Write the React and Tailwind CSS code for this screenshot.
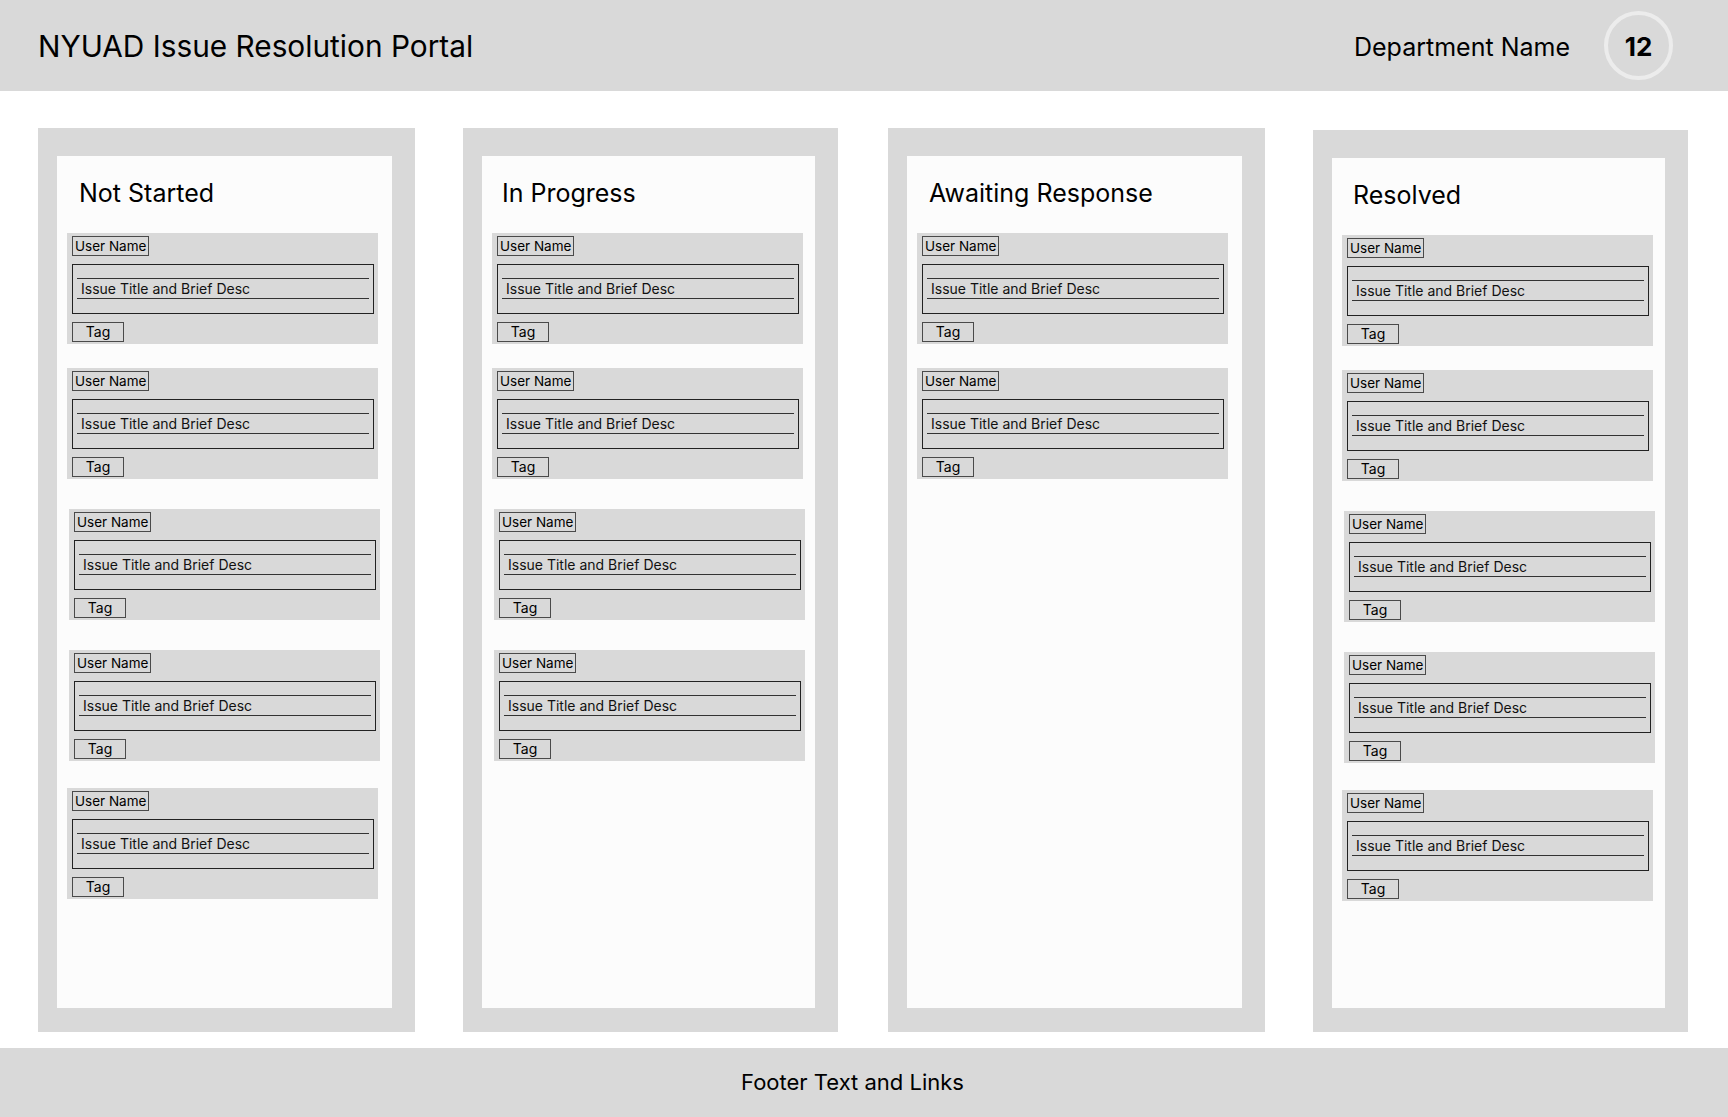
import React from 'react';

const font = { fontFamily: 'Inter, "Noto Sans", sans-serif' };

// top margin / left shift for each card slot, read off the mockup
const SLOTS = [
  { mt: 'mt-[25px]', ml: 'ml-[10px]' },
  { mt: 'mt-[24px]', ml: 'ml-[10px]' },
  { mt: 'mt-[30px]', ml: 'ml-[12px]' },
  { mt: 'mt-[30px]', ml: 'ml-[12px]' },
  { mt: 'mt-[27px]', ml: 'ml-[10px]' },
];

const COLUMNS = [
  { title: 'Not Started', count: 5, outer: 'w-[377px] h-[904px]', titlePad: 'pl-[22px]' },
  { title: 'In Progress', count: 4, outer: 'w-[375px] h-[904px] ml-[48px]', titlePad: 'pl-[20px]' },
  { title: 'Awaiting Response', count: 2, outer: 'w-[377px] h-[904px] ml-[50px]', titlePad: 'pl-[22px]' },
  { title: 'Resolved', count: 5, outer: 'w-[375px] h-[902px] mt-[2px] ml-[48px]', titlePad: 'pl-[21px]' },
];

function IssueCard({ slot }) {
  return (
    <div className={`${slot.mt} ${slot.ml} w-[311px] h-[111px] bg-[#d9d9d9] pt-[3px] pl-[5px] pr-[4px] flex flex-col`}>
      <div className="self-start h-[20px] px-[2px] border border-[#4a4a4a] text-[13.5px] leading-[18px] text-black">
        User Name
      </div>
      <div className="mt-[8px] w-[302px] h-[50px] border border-[#222] pt-[13px] px-[4px]">
        <div className="border-t border-b border-[#333] h-[21px] pl-[4px] text-[14px] leading-[19px] text-[#111]">
          Issue Title and Brief Desc
        </div>
      </div>
      <div className="mt-[8px] w-[52px] h-[20px] border border-[#4a4a4a] text-[14px] leading-[18px] text-center text-black">
        Tag
      </div>
    </div>
  );
}

function Column({ col }) {
  return (
    <div className={`${col.outer} shrink-0 bg-[#d9d9d9] pt-[28px] pl-[19px] pr-[23px] pb-[24px] flex`}>
      <div className="flex-1 bg-[#fcfcfc] flex flex-col">
        <h2 className={`pt-[22px] ${col.titlePad} text-[25px] leading-[30px] font-normal text-black`}>
          {col.title}
        </h2>
        {Array.from({ length: col.count }).map((_, i) => (
          <IssueCard key={i} slot={SLOTS[i]} />
        ))}
      </div>
    </div>
  );
}

export default function App() {
  return (
    <div className="w-[1728px] h-[1117px] bg-white flex flex-col" style={font}>
      <header className="h-[91px] bg-[#d9d9d9] flex items-center pl-[38px] pr-[55px]">
        <h1 className="mt-[2px] text-[29.8px] font-normal text-black">NYUAD Issue Resolution Portal</h1>
        <div className="ml-auto flex items-center">
          <span className="mt-[4px] text-[25px] text-black">Department Name</span>
          <div className="ml-[34px] w-[69px] h-[69px] rounded-full border-[4px] border-[#ececec] flex items-center justify-center">
            <span className="mt-[2px] text-[26px] font-bold text-black">12</span>
          </div>
        </div>
      </header>

      <main className="flex-1 flex items-start pt-[37px] pl-[38px]">
        {COLUMNS.map((col) => (
          <Column key={col.title} col={col} />
        ))}
      </main>

      <footer className="h-[69px] bg-[#d9d9d9] flex items-center justify-center pr-[23px]">
        <span className="text-[22px] text-black">Footer Text and Links</span>
      </footer>
    </div>
  );
}
